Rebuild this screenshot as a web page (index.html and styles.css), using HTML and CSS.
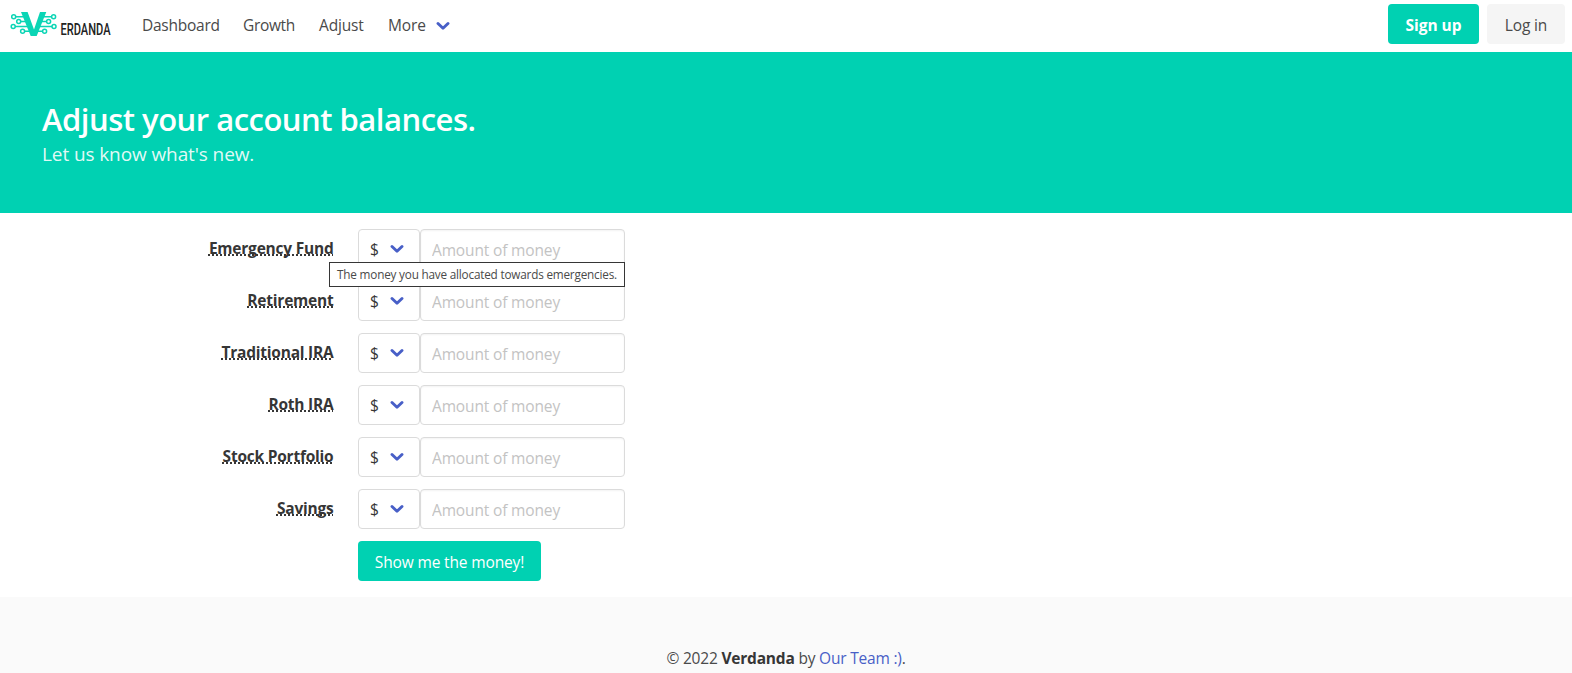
FILE: index.html
```html
<!DOCTYPE html>
<html lang="en">
<head>
<meta charset="utf-8">
<title>Verdanda</title>
<link rel="stylesheet" href="styles.css">
</head>
<body>
<svg class="defs" width="0" height="0"><symbol id="chevron" viewBox="0 0 14 10"><path d="M2 2.5 7 7.3l5-4.8" fill="none" stroke="#485fc7" stroke-width="2.9" stroke-linecap="round" stroke-linejoin="round"/></symbol></svg>
<nav class="navbar">
  <svg class="logo" width="132" height="36" viewBox="0 -4 132 36">
    <g fill="none" stroke="#0bd5b5" stroke-width="1.5">
      <circle cx="3.7" cy="4.8" r="2"/><circle cx="8.7" cy="9.6" r="2"/><circle cx="3.2" cy="14.4" r="2"/><circle cx="12.6" cy="19.2" r="2"/>
      <circle cx="43.6" cy="4.8" r="2"/><circle cx="38.6" cy="9.6" r="2"/><circle cx="44" cy="14.4" r="2"/><circle cx="34.6" cy="19.2" r="2"/>
      <path d="M5.7 4.8h8M10.7 9.6h6M5.2 14.4h13M14.6 19.2h5M41.6 4.8h-8M36.6 9.6h-6M42 14.4h-13M32.6 19.2h-5"/>
    </g>
    <path d="M11 0h6.6l6.4 17.5L30 0h6.3l-9.6 24h-6z" fill="#0bd5b5"/>
    <text class="logo-text" x="50.5" y="23" textLength="50" lengthAdjust="spacingAndGlyphs">ERDANDA</text>
  </svg>
  <div class="menu">
    <a class="item dashboard">Dashboard</a><a class="item growth">Growth</a><a class="item adjust">Adjust</a><a class="item more">More<svg class="chevron"><use href="#chevron"/></svg></a>
  </div>
  <div class="buttons"><a class="button primary signup">Sign up</a><a class="button light">Log in</a></div>
</nav>
<section class="hero">
  <h1 class="title">Adjust your account balances.</h1>
  <p class="subtitle">Let us know what's new.</p>
</section>
<main class="form">
  <div class="field"><label class="label"><span class="abbr">Emergency Fund</span></label><div class="select">$<svg class="chevron"><use href="#chevron"/></svg></div><div class="control"><input class="input" placeholder="Amount of money"><span class="tooltip">The money you have allocated towards emergencies.</span></div></div>
  <div class="field"><label class="label"><span class="abbr">Retirement</span></label><div class="select">$<svg class="chevron"><use href="#chevron"/></svg></div><div class="control"><input class="input" placeholder="Amount of money"></div></div>
  <div class="field"><label class="label"><span class="abbr">Traditional IRA</span></label><div class="select">$<svg class="chevron"><use href="#chevron"/></svg></div><div class="control"><input class="input" placeholder="Amount of money"></div></div>
  <div class="field"><label class="label"><span class="abbr">Roth IRA</span></label><div class="select">$<svg class="chevron"><use href="#chevron"/></svg></div><div class="control"><input class="input" placeholder="Amount of money"></div></div>
  <div class="field"><label class="label"><span class="abbr">Stock Portfolio</span></label><div class="select">$<svg class="chevron"><use href="#chevron"/></svg></div><div class="control"><input class="input" placeholder="Amount of money"></div></div>
  <div class="field"><label class="label"><span class="abbr">Savings</span></label><div class="select">$<svg class="chevron"><use href="#chevron"/></svg></div><div class="control"><input class="input" placeholder="Amount of money"></div></div>
  <div class="field"><span class="label"></span><button class="button primary submit">Show me the money!</button></div>
</main>
<footer class="footer"><p class="copy">© 2022 <strong>Verdanda</strong> by <a class="link">Our Team :)</a>.</p></footer>
</body>
</html>
```
FILE: styles.css
```css
* { box-sizing: border-box; }
html { overflow: hidden; }
body { margin: 0; height: 673px; overflow: hidden; display: flex; flex-direction: column; font: 15.5px/24px "Open Sans", sans-serif; letter-spacing: -0.15px; color: #4a4a4a; background: #fff; }
.defs { position: absolute; }
.navbar { height: 52px; flex: none; display: flex; align-items: center; padding: 0 7px 0 10px; }
.logo { display: block; flex: none; }
.logo-text { font: 500 16.5px Roboto, sans-serif; letter-spacing: 0; fill: #222; }
.menu { display: flex; align-items: center; gap: 24px; margin-top: -3px; }
.item { display: flex; align-items: center; white-space: nowrap; }
.dashboard { width: 77px; letter-spacing: -0.25px; }
.growth { width: 52px; letter-spacing: -0.35px; }
.adjust { width: 45px; }
.chevron { width: 14px; height: 10px; flex: none; }
.item .chevron { margin: 2px 0 0 10px; }
.buttons { display: flex; gap: 8px; margin: -4px 0 0 auto; }
.button { height: 40px; display: flex; align-items: center; justify-content: center; border: 0; border-radius: 4px; padding: 1px 0 0; font: inherit; letter-spacing: inherit; white-space: nowrap; }
.primary { background: #00d1b2; color: #fff; }
.signup { width: 91px; font-weight: 700; letter-spacing: 0; }
.light { width: 78px; background: #f5f5f5; color: #4a4a4a; }
.hero { height: 161px; flex: none; padding: 47px 42px; background: #00d1b2; color: #fff; }
.title { margin: 0; font-size: 31px; line-height: 40px; font-weight: 600; letter-spacing: -0.5px; white-space: nowrap; }
.subtitle { margin: 3px 0 0; font-size: 19px; line-height: 25px; letter-spacing: -0.1px; color: rgba(255,255,255,.9); }
.form { flex: none; padding: 16px 0; display: flex; flex-direction: column; gap: 12px; }
.field { display: flex; height: 40px; }
.label { width: 333.5px; margin-right: 24.5px; padding-top: 7px; text-align: right; font-weight: 700; letter-spacing: -0.22px; color: #363636; }
.abbr { text-decoration: underline dotted; text-decoration-thickness: 1.5px; text-underline-offset: 0; text-decoration-skip-ink: none; }
.select { width: 62px; height: 40px; border: 1px solid #dbdbdb; border-radius: 4px; display: flex; align-items: center; gap: 11.5px; padding-left: 11px; color: #363636; }
.control { position: relative; }
.input { display: block; width: 205px; height: 40px; border: 1px solid #dbdbdb; border-radius: 4px; padding: 2px 11px 0; background: #fff; font: inherit; letter-spacing: -0.15px; box-shadow: inset 0 1px 2px rgba(10,10,10,.05); }
.input::placeholder { color: #c3c3c3; opacity: 1; }
.tooltip { position: absolute; z-index: 2; top: 33px; right: 0; width: 296px; height: 25px; border: 1px solid #363636; background: #fff; color: #4a4a4a; font-size: 11.75px; line-height: 23px; text-align: center; white-space: nowrap; letter-spacing: -0.2px; }
.submit { width: 183px; }
.footer { flex: 1 0 76px; background: #fafafa; padding-top: 49px; text-align: center; }
.copy { margin: 0; letter-spacing: -0.2px; }
.footer strong { color: #363636; font-weight: 700; }
.link { color: #485fc7; }
```
